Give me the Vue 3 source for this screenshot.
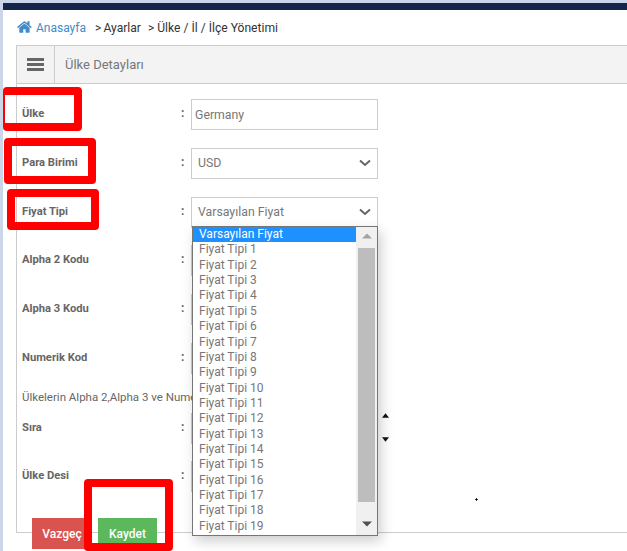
<script setup>
const rows = [
  { label: 'Ülke', kind: 'input', value: 'Germany' },
  { label: 'Para Birimi', kind: 'select', value: 'USD' },
  { label: 'Fiyat Tipi', kind: 'select', value: 'Varsayılan Fiyat' },
  { label: 'Alpha 2 Kodu', kind: 'input', value: '' },
  { label: 'Alpha 3 Kodu', kind: 'input', value: '' },
  { label: 'Numerik Kod', kind: 'input', value: '' },
]
const rows2 = [
  { label: 'Sıra', kind: 'input', value: '' },
  { label: 'Ülke Desi', kind: 'input', value: '' },
]
const options = Array.from({ length: 19 }, (_, i) => `Fiyat Tipi ${i + 1}`)
const frames = [
  { cls: 'f1' }, { cls: 'f2' }, { cls: 'f3' }, { cls: 'f4' },
]
</script>

<template>
  <div class="page">
    <div class="main">
      <div class="topbar"></div>
      <nav class="crumb">
        <svg class="home" viewBox="0 0 1792 1792"><path fill="#428bca" d="M1408 992v480q0 26-19 45t-45 19h-384v-384h-256v384h-384q-26 0-45-19t-19-45v-480q0-1 .5-3t.5-3l575-474 575 474q1 2 1 6zm223-69l-62 74q-8 9-21 11h-3q-13 0-21-7l-692-577-692 577q-12 8-24 7-13-2-21-11l-62-74q-8-10-7-23.500t11-21.500l719-599q32-26 76-26t76 26l244 204v-195q0-14 9-23t23-9h192q14 0 23 9t9 23v408l219 182q10 8 11 21.500t-7 23.500z"/></svg>
        <span class="link">Anasayfa</span>
        <span class="sep">&gt; Ayarlar</span>
        <span class="sep2">&gt; Ülke / İl / İlçe Yönetimi</span>
      </nav>
      <section class="panel">
        <header class="phead">
          <div class="burger"><i></i><i></i><i></i></div>
          <h2 class="ptitle">Ülke Detayları</h2>
        </header>
        <div class="pbody">
          <div v-for="r in rows" :key="r.label" class="row">
            <label class="lbl">{{ r.label }}</label>
            <span class="colon">:</span>
            <div class="field" :class="r.kind">
              <span>{{ r.value }}</span>
              <svg v-if="r.kind === 'select'" class="chev" viewBox="0 0 12 8"><path d="M1 1.500 6 6l5-4.500" fill="none" stroke="#666" stroke-width="2"/></svg>
            </div>
          </div>
          <p class="note">Ülkelerin Alpha 2,Alpha 3 ve Nume</p>
          <div v-for="r in rows2" :key="r.label" class="row">
            <label class="lbl">{{ r.label }}</label>
            <span class="colon">:</span>
            <div class="field input"></div>
          </div>
        </div>
      </section>
      <div class="actions">
        <button class="btn red">Vazgeç</button>
        <button class="btn green">Kaydet</button>
      </div>
    </div>

    <div class="dropdown">
      <ul class="list">
        <li class="sel">Varsayılan Fiyat</li>
        <li v-for="o in options" :key="o">{{ o }}</li>
      </ul>
      <div class="sbar">
        <svg class="arr" viewBox="0 0 10 6"><path d="M0 5.500 5 .5l5 5z" fill="#a3a3a3"/></svg>
        <div class="thumb"></div>
        <svg class="arr" viewBox="0 0 10 6"><path d="M0 .5 5 5.500 10 .5z" fill="#505050"/></svg>
      </div>
    </div>

    <svg class="spin up" viewBox="0 0 8 5"><path d="M0 5 4 0l4 5z" fill="#111"/></svg>
    <svg class="spin down" viewBox="0 0 8 5"><path d="M0 0 4 5l4-5z" fill="#111"/></svg>
    <span class="dot"></span>

    <div v-for="f in frames" :key="f.cls" class="frame" :class="f.cls"></div>
  </div>
</template>

<style>
html, body { margin: 0; padding: 0; }
</style>

<style scoped>
.page {
  position: relative;
  width: 627px;
  height: 551px;
  overflow: hidden;
  box-sizing: border-box;
  padding: 3px 0 0 3px;
  background: #cbd6e9;
  font-family: Roboto, "Liberation Sans", sans-serif;
  color: #666;
}
.main { background: #fff; height: 548px; }
.topbar { height: 7px; background: #14264c; }
.crumb {
  height: 35px;
  display: flex;
  align-items: center;
  padding-left: 14px;
  font-size: 12.100px;
  color: #333;
  box-sizing: border-box;
}
.home { width: 16px; height: 16px; margin-right: 3px; margin-top: -1px; }
.link { color: #428bca; font-size: 12px; }
.sep { margin-left: 9px; word-spacing: -1px; }
.sep2 { margin-left: 7px; }
.panel {
  margin-left: 13px;
  margin-right: -20px;
  height: 488px;
  box-sizing: border-box;
  border: 1px solid #ccc;
  background: #fff;
}
.phead {
  height: 38px;
  box-sizing: border-box;
  display: flex;
  align-items: center;
  background: #f3f3f3;
  border-bottom: 1px solid #ccc;
}
.burger {
  width: 38px;
  height: 100%;
  box-sizing: border-box;
  border-right: 1px solid #ccc;
  display: flex;
  flex-direction: column;
  align-items: center;
  justify-content: center;
  gap: 2px;
}
.burger i { display: block; width: 17px; height: 3px; background: #666; }
.ptitle { margin: 0 0 0 10px; font-size: 13px; font-weight: 400; color: #777; }
.pbody { padding: 15px 0 0 5px; }
.row { display: flex; height: 48.750px; align-items: flex-start; }
.lbl { width: 159px; font-size: 11.200px; font-weight: 700; color: #666; line-height: 30px; }
.colon { width: 10px; font-size: 12px; font-weight: 700; line-height: 28px; }
.field {
  width: 187px;
  height: 31px;
  box-sizing: border-box;
  border: 1px solid #ccc;
  display: flex;
  align-items: center;
  justify-content: space-between;
  font-size: 12.300px;
  color: #777;
}
.field.input { padding-left: 3px; }
.field.select { padding: 0 6px 0 6px; }
.chev { width: 12px; height: 8px; }
.note { margin: -1px 0 0; height: 22px; font-size: 11.500px; line-height: 13px; color: #666; white-space: nowrap; }
.actions { display: flex; gap: 3px; margin-top: -15px; padding-left: 29px; }
.btn {
  height: 31px;
  border: 0;
  padding: 0;
  font: 500 12px Roboto, "Liberation Sans", sans-serif;
  color: #fff;
}
.btn.red { width: 60px; background: #d9534f; margin-right: 6px; }
.btn.green { width: 59px; background: #5cb85c; margin-left: -3px; }
.dropdown {
  position: absolute;
  left: 192px;
  top: 226px;
  width: 186px;
  height: 310px;
  box-sizing: border-box;
  border: 1px solid #767676;
  background: #fff;
  box-shadow: 3px 5px 12px rgba(0, 0, 0, 0.2);
  display: flex;
}
.list {
  margin: 0;
  padding: 0;
  list-style: none;
  flex: 1;
  font-size: 12px;
  color: #777;
}
.list li { height: 15.370px; line-height: 15px; padding-left: 6px; white-space: nowrap; }
.list li.sel { background: #1e90ff; color: #fff; }
.sbar {
  width: 21px;
  background: #f0f0f0;
  display: flex;
  flex-direction: column;
  align-items: center;
  justify-content: space-between;
  padding: 6px 0 8px;
  box-sizing: border-box;
  position: relative;
}
.arr { width: 10px; height: 6px; }
.thumb {
  position: absolute;
  left: 2px;
  right: 2px;
  top: 21px;
  bottom: 33px;
  background: #bdbdbd;
}
.spin { position: absolute; width: 7px; height: 5px; left: 382px; }
.spin.up { top: 413px; }
.spin.down { top: 437px; }
.dot { position: absolute; left: 475px; top: 498px; width: 3px; height: 3px; background: radial-gradient(circle, #000 45%, transparent 55%); }
.frame {
  position: absolute;
  box-sizing: border-box;
  border: 8px solid #f00;
  border-radius: 4px;
}
.f1 { left: 3px; top: 87px; width: 79px; height: 44px; border-left-width: 2px; }
.f2 { left: 4px; top: 138px; width: 92px; height: 46px; }
.f3 { left: 7px; top: 189px; width: 92px; height: 41px; }
.f4 { left: 84px; top: 479px; width: 89px; height: 72px; }
</style>
